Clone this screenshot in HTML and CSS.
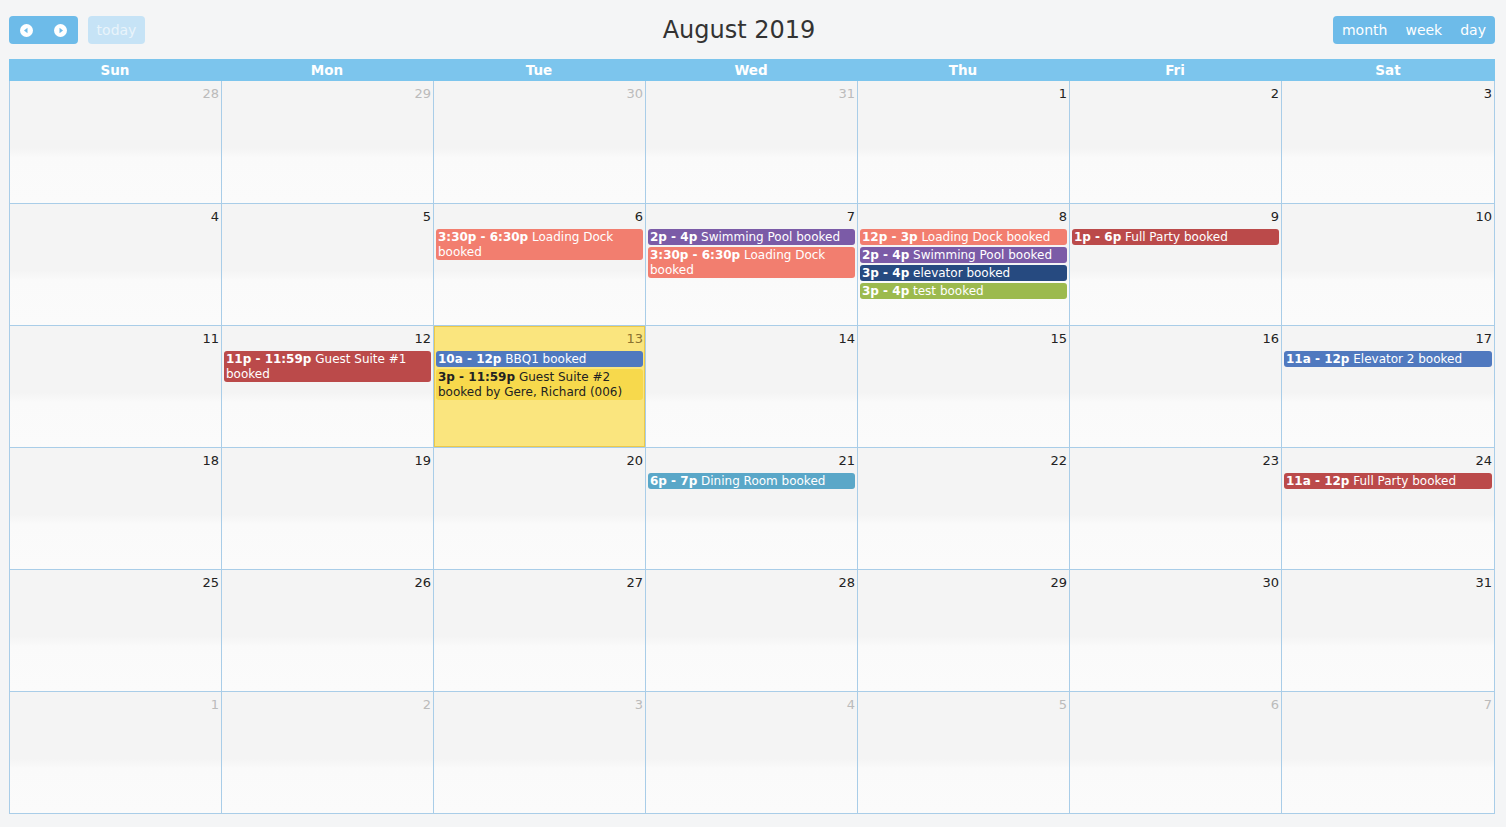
FILE: index.html
```html
<!DOCTYPE html>
<html>
<head>
<meta charset="utf-8">
<link rel="stylesheet" href="styles.css">
</head>
<body>
<div class="page">
  <div class="toolbar">
    <div class="left">
      <div class="btn-group">
        <span class="btn icon-btn"><svg width="13" height="13" viewBox="0 0 13 13"><circle cx="6.5" cy="6.5" r="6.5" fill="#fff"/><path d="M4 6.5 L7.5 3.8 L7.5 9.2 Z" fill="#6dbbe9"/></svg></span>
        <span class="btn icon-btn"><svg width="13" height="13" viewBox="0 0 13 13"><circle cx="6.5" cy="6.5" r="6.5" fill="#fff"/><path d="M9 6.5 L5.5 3.8 L5.5 9.2 Z" fill="#6dbbe9"/></svg></span>
      </div>
      <span class="btn today">today</span>
    </div>
    <h2 class="title">August 2019</h2>
    <div class="right">
      <div class="btn-group views">
        <span class="btn">month</span>
        <span class="btn">week</span>
        <span class="btn">day</span>
      </div>
    </div>
  </div>
  <div class="cal">
    <div class="head">
      <div>Sun</div><div>Mon</div><div>Tue</div><div>Wed</div><div>Thu</div><div>Fri</div><div>Sat</div>
    </div>
    <div class="grid">
      <div class="cell other"><div class="num">28</div></div>
      <div class="cell other"><div class="num">29</div></div>
      <div class="cell other"><div class="num">30</div></div>
      <div class="cell other"><div class="num">31</div></div>
      <div class="cell"><div class="num">1</div></div>
      <div class="cell"><div class="num">2</div></div>
      <div class="cell"><div class="num">3</div></div>

      <div class="cell"><div class="num">4</div></div>
      <div class="cell"><div class="num">5</div></div>
      <div class="cell"><div class="num">6</div>
        <div class="ev salmon"><b>3:30p - 6:30p</b> Loading Dock booked</div>
      </div>
      <div class="cell"><div class="num">7</div>
        <div class="ev purple"><b>2p - 4p</b> Swimming Pool booked</div>
        <div class="ev salmon"><b>3:30p - 6:30p</b> Loading Dock booked</div>
      </div>
      <div class="cell"><div class="num">8</div>
        <div class="ev salmon"><b>12p - 3p</b> Loading Dock booked</div>
        <div class="ev purple"><b>2p - 4p</b> Swimming Pool booked</div>
        <div class="ev navy"><b>3p - 4p</b> elevator booked</div>
        <div class="ev green"><b>3p - 4p</b> test booked</div>
      </div>
      <div class="cell"><div class="num">9</div>
        <div class="ev red"><b>1p - 6p</b> Full Party booked</div>
      </div>
      <div class="cell"><div class="num">10</div></div>

      <div class="cell"><div class="num">11</div></div>
      <div class="cell"><div class="num">12</div>
        <div class="ev red"><b>11p - 11:59p</b> Guest Suite #1 booked</div>
      </div>
      <div class="cell today-cell"><div class="num">13</div>
        <div class="ev blue"><b>10a - 12p</b> BBQ1 booked</div>
        <div class="ev yellow"><b>3p - 11:59p</b> Guest Suite #2 booked by Gere, Richard (006)</div>
      </div>
      <div class="cell"><div class="num">14</div></div>
      <div class="cell"><div class="num">15</div></div>
      <div class="cell"><div class="num">16</div></div>
      <div class="cell"><div class="num">17</div>
        <div class="ev blue"><b>11a - 12p</b> Elevator 2 booked</div>
      </div>

      <div class="cell"><div class="num">18</div></div>
      <div class="cell"><div class="num">19</div></div>
      <div class="cell"><div class="num">20</div></div>
      <div class="cell"><div class="num">21</div>
        <div class="ev teal"><b>6p - 7p</b> Dining Room booked</div>
      </div>
      <div class="cell"><div class="num">22</div></div>
      <div class="cell"><div class="num">23</div></div>
      <div class="cell"><div class="num">24</div>
        <div class="ev red"><b>11a - 12p</b> Full Party booked</div>
      </div>

      <div class="cell"><div class="num">25</div></div>
      <div class="cell"><div class="num">26</div></div>
      <div class="cell"><div class="num">27</div></div>
      <div class="cell"><div class="num">28</div></div>
      <div class="cell"><div class="num">29</div></div>
      <div class="cell"><div class="num">30</div></div>
      <div class="cell"><div class="num">31</div></div>

      <div class="cell other"><div class="num">1</div></div>
      <div class="cell other"><div class="num">2</div></div>
      <div class="cell other"><div class="num">3</div></div>
      <div class="cell other"><div class="num">4</div></div>
      <div class="cell other"><div class="num">5</div></div>
      <div class="cell other"><div class="num">6</div></div>
      <div class="cell other"><div class="num">7</div></div>
    </div>
  </div>
</div>
</body>
</html>
```

FILE: styles.css
```css
html, body {
  margin: 0;
  padding: 0;
  background: #f4f5f6;
  font-family: "DejaVu Sans", Verdana, sans-serif;
  color: #333;
}
.page {
  padding: 16px 0 0 9px;
  width: 1486px;
}
.toolbar {
  display: flex;
  align-items: flex-start;
  height: 28px;
  margin-bottom: 15px;
}
.left, .right {
  display: flex;
  gap: 10px;
  flex: none;
}
.btn-group {
  display: flex;
  background: #6dbbe9;
  border-radius: 4px;
  height: 28px;
}
.btn {
  display: flex;
  align-items: center;
  justify-content: center;
  height: 28px;
  color: #fff;
  font-size: 14px;
  box-sizing: border-box;
}
.icon-btn {
  width: 34.5px;
}
.icon-btn svg { display: block; }
.today {
  width: 57px;
  background: #c6e3f6;
  color: #e9f4fb;
  border-radius: 4px;
}
.views .btn {
  padding: 0 9px;
}
.title {
  flex: 1;
  text-align: center;
  margin: 0;
  font-weight: normal;
  font-size: 24px;
  line-height: 28px;
  color: #333;
}
.cal {
  width: 1486px;
}
.head {
  display: grid;
  grid-template-columns: repeat(6, 212px) 214px;
  background: #7cc5ed;
  height: 22px;
}
.head div {
  color: #fff;
  font-weight: bold;
  font-size: 13.5px;
  text-align: center;
  line-height: 22px;
}
.grid {
  display: grid;
  grid-template-columns: repeat(6, 212px) 213px;
  grid-auto-rows: 122px;
  border-right: 1px solid #a9cde8;
  border-bottom: 1px solid #a9cde8;
}
.cell {
  border-left: 1px solid #a9cde8;
  border-top: 1px solid #a9cde8;
  background: linear-gradient(#f4f4f4 0, #f4f4f4 55%, #fafafa 63%, #fbfbfb 100%);
  display: flex;
  flex-direction: column;
  gap: 2px;
  overflow: hidden;
}
.grid .cell:nth-child(-n+7) { border-top: none; }
.num {
  text-align: right;
  font-size: 13px;
  line-height: 16px;
  padding: 5px 2px 0 0;
  height: 21px;
  box-sizing: border-box;
  color: #222;
}
.other .num { color: #bbb; }
.today-cell {
  background: #fae57e;
  box-shadow: inset 0 0 0 1px #ecc94a;
}
.today-cell .num { color: #8a7230; }
.ev {
  margin: 0 2px;
  padding: 1px 2px 0;
  border-radius: 3px;
  font-size: 12px;
  line-height: 15px;
  color: #fff;
}
.grid .cell > .num + .ev { margin-top: 2px; }
.salmon { background: #f27e6f; }
.purple { background: #7b5ba7; }
.navy { background: #264a80; }
.green { background: #9cba4e; }
.red { background: #bb4a4a; }
.blue { background: #5079bf; }
.teal { background: #5aa7c8; }
.yellow { background: #f7d94c; color: #222; }
```
